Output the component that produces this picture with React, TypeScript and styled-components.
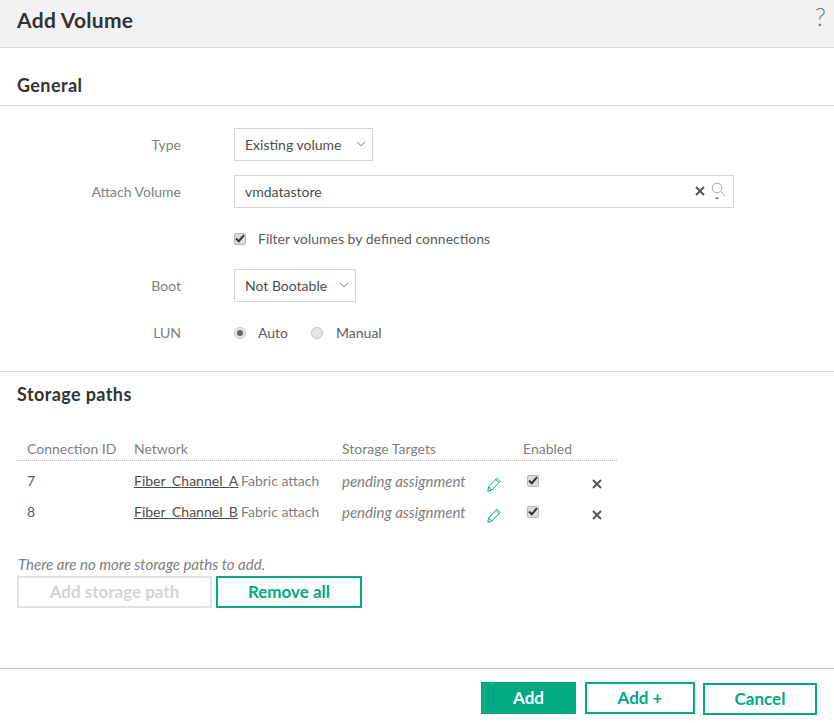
import styled, { createGlobalStyle } from 'styled-components';

const GlobalStyle = createGlobalStyle`
  html, body {
    margin: 0;
    padding: 0;
    background: #fff;
    overflow: hidden;
  }
  * {
    box-sizing: border-box;
  }
`;

const Page = styled.div`
  width: 834px;
  height: 723px;
  display: flex;
  flex-direction: column;
  font-family: Lato, 'Noto Sans', sans-serif;
  font-size: 14px;
  color: #666;
`;

const Header = styled.header`
  height: 48px;
  flex: none;
  background: #f2f2f2;
  border-bottom: 1px solid #d8d8d8;
  display: flex;
  justify-content: space-between;
  padding: 0 8px 0 17px;
`;

const Title = styled.h1`
  margin: 7px 0 0;
  font-size: 21px;
  line-height: 26px;
  font-weight: 700;
  letter-spacing: 0.3px;
  color: #333;
`;

const Help = styled.span`
  font-size: 26px;
  font-weight: 300;
  line-height: 32px;
  color: #777;
`;

const SectionHead = styled.h2`
  margin: 0;
  height: 58px;
  padding: 26px 17px 0;
  font-size: 18px;
  line-height: 22px;
  font-weight: 700;
  letter-spacing: 0.4px;
  color: #333;
  border-bottom: 1px solid #dcdcdc;
`;

const Form = styled.div`
  height: 269px;
  padding-top: 22px;
  border-bottom: 1px solid #dcdcdc;
  display: flex;
  flex-direction: column;
`;

const Row = styled.div<{ $height: number; $mb?: number }>`
  height: ${(p) => p.$height}px;
  margin-bottom: ${(p) => p.$mb ?? 0}px;
  display: flex;
  align-items: center;
`;

const Label = styled.div`
  width: 181px;
  text-align: right;
  margin-right: 53px;
  color: #808080;
`;

const Select = styled.div<{ $width: number }>`
  width: ${(p) => p.$width}px;
  height: 33px;
  border: 1px solid #d6d6d6;
  padding: 0 6px 0 10px;
  color: #4d4d4d;
  display: flex;
  align-items: center;
  justify-content: space-between;
`;

const Input = styled(Select)`
  padding-right: 7px;
`;

const InputIcons = styled.span`
  display: flex;
  align-items: center;
  gap: 6px;
`;

const CheckBox = styled.span`
  width: 12px;
  height: 12px;
  flex: none;
  border: 1px solid #b8b8b8;
  border-radius: 2px;
  background: #dcdcdc;
  display: flex;
  align-items: center;
  justify-content: center;
`;

const CheckLabel = styled.span`
  margin-left: 12px;
  color: #5c5c5c;
`;

const Radio = styled.span<{ $on?: boolean }>`
  width: 12px;
  height: 12px;
  flex: none;
  border-radius: 50%;
  border: 1px solid #c4c4c4;
  background: #e6e6e6;
  display: flex;
  align-items: center;
  justify-content: center;
  &::after {
    content: '';
    display: ${(p) => (p.$on ? 'block' : 'none')};
    width: 6px;
    height: 6px;
    border-radius: 50%;
    background: #666;
  }
`;

const RadioText = styled.span`
  margin: 0 23px 0 12px;
  color: #5c5c5c;
  & + span + & {
    margin-left: 13px;
  }
`;

const StorageHead = styled.h2`
  margin: 11px 0 0;
  padding: 0 17px;
  font-size: 18px;
  line-height: 22px;
  font-weight: 700;
  letter-spacing: 0.4px;
  color: #333;
`;

const Paths = styled.div`
  width: 600px;
  margin: 33px 0 0 17px;
`;

const PathRow = styled.div<{ $head?: boolean }>`
  display: grid;
  grid-template-columns: 117px 107px 101px 145px 36px 69px 25px;
  align-items: center;
  height: ${(p) => (p.$head ? 23 : 31)}px;
  padding-bottom: ${(p) => (p.$head ? 2 : 0)}px;
  border-bottom: ${(p) => (p.$head ? '1px dotted #bbb' : 'none')};
  margin-bottom: ${(p) => (p.$head ? 4 : 0)}px;
`;

const HeadCell = styled.div<{ $span?: number }>`
  padding-left: ${(p) => (p.$span === 1 ? 10 : 0)}px;
  grid-column: span ${(p) => p.$span ?? 1};
  color: #808080;
`;

const IdCell = styled.div`
  padding-left: 10px;
  color: #5c5c5c;
`;

const NetworkLink = styled.a`
  color: #4d4d4d;
  text-decoration: underline;
  white-space: nowrap;
`;

const Muted = styled.div`
  color: #808080;
  white-space: nowrap;
`;

const Pending = styled(Muted)`
  font-size: 15px;
  font-style: italic;
`;

const IconCell = styled.div`
  display: flex;
  align-items: center;
  padding-top: 7px;
`;

const CheckCell = styled.div`
  padding: 0 0 0 4px;
`;

const Note = styled.div`
  margin: 28px 0 0 18px;
  height: 18px;
  line-height: 18px;
  font-size: 15px;
  font-style: italic;
  color: #808080;
`;

const ButtonRow = styled.div`
  display: flex;
  gap: 4px;
  margin: 3px 0 0 17px;
`;

const Button = styled.button<{
  $width: number;
  $variant?: 'primary' | 'disabled';
  $drop?: number;
}>`
  width: ${(p) => p.$width}px;
  height: 32px;
  padding: 0 0 2px;
  margin-top: ${(p) => p.$drop ?? 0}px;
  font: 700 17px Lato, 'Noto Sans', sans-serif;
  background: ${(p) => (p.$variant === 'primary' ? '#01a982' : '#fff')};
  color: ${(p) =>
    p.$variant === 'primary' ? '#fff' : p.$variant === 'disabled' ? '#d4d4d4' : '#01a982'};
  border: 2px solid ${(p) => (p.$variant === 'disabled' ? '#e2e2e2' : '#01a982')};
`;

const Footer = styled.footer`
  margin-top: 60px;
  height: 55px;
  border-top: 1px solid #c4c4c4;
  padding: 13px 17px 0 0;
  display: flex;
  justify-content: flex-end;
  gap: 8px;
  > button:first-child {
    margin-right: 1px;
  }
`;

const Chevron = () => (
  <svg width="10" height="6" viewBox="0 0 10 6" fill="none" stroke="#777" strokeWidth="1">
    <path d="M1 .8 5 4.8 9 .8" />
  </svg>
);

const Cross = ({ size = 10 }: { size?: number }) => (
  <svg width={size} height={size} viewBox="0 0 10 10" stroke="#555" strokeWidth="2" fill="none">
    <path d="M1 1 9 9M9 1 1 9" />
  </svg>
);

const Search = () => (
  <svg width="15" height="18" viewBox="0 0 15 18" fill="none" stroke="#aaa" strokeWidth="1">
    <circle cx="6" cy="6" r="4.8" />
    <path d="M9.5 9.5 14 14" />
    <path d="M3.5 15.5h5l-2.5 2z" fill="#777" stroke="none" />
  </svg>
);

const Pencil = () => (
  <svg width="14" height="15" viewBox="0 0 14 15" fill="none" stroke="#01a982" strokeWidth="1">
    <path d="M.8 14.2 1.6 10 10 1.2 13.2 4.4 4.8 13z" />
    <path d="M8.8 2.4 12 5.6M1.6 10 4.8 13" />
  </svg>
);

const Tick = () => (
  <svg width="10" height="9" viewBox="0 0 10 9" fill="none" stroke="#333" strokeWidth="2">
    <path d="M1 4.5 3.8 7.2 9 1.2" />
  </svg>
);

const paths = [
  { id: 7, network: 'Fiber_Channel_A' },
  { id: 8, network: 'Fiber_Channel_B' },
];

const App = () => {
  return (
    <Page>
      <GlobalStyle />
      <Header>
        <Title>Add Volume</Title>
        <Help>?</Help>
      </Header>

      <SectionHead>General</SectionHead>
      <Form>
        <Row $height={33} $mb={14}>
          <Label>Type</Label>
          <Select $width={139}>
            Existing volume
            <Chevron />
          </Select>
        </Row>
        <Row $height={33} $mb={14}>
          <Label>Attach Volume</Label>
          <Input $width={500}>
            vmdatastore
            <InputIcons>
              <Cross />
              <Search />
            </InputIcons>
          </Input>
        </Row>
        <Row $height={34} $mb={13}>
          <Label />
          <CheckBox>
            <Tick />
          </CheckBox>
          <CheckLabel>Filter volumes by defined connections</CheckLabel>
        </Row>
        <Row $height={33} $mb={15}>
          <Label>Boot</Label>
          <Select $width={122}>
            Not Bootable
            <Chevron />
          </Select>
        </Row>
        <Row $height={32}>
          <Label>LUN</Label>
          <Radio $on />
          <RadioText>Auto</RadioText>
          <Radio />
          <RadioText>Manual</RadioText>
        </Row>
      </Form>

      <StorageHead>Storage paths</StorageHead>
      <Paths>
        <PathRow $head>
          <HeadCell $span={1}>Connection ID</HeadCell>
          <HeadCell $span={2}>Network</HeadCell>
          <HeadCell $span={2}>Storage Targets</HeadCell>
          <HeadCell $span={2}>Enabled</HeadCell>
        </PathRow>
        {paths.map((path) => (
          <PathRow key={path.id}>
            <IdCell>{path.id}</IdCell>
            <div>
              <NetworkLink>{path.network}</NetworkLink>
            </div>
            <Muted>Fabric attach</Muted>
            <Pending>pending assignment</Pending>
            <IconCell>
              <Pencil />
            </IconCell>
            <CheckCell>
              <CheckBox>
                <Tick />
              </CheckBox>
            </CheckCell>
            <IconCell>
              <Cross />
            </IconCell>
          </PathRow>
        ))}
      </Paths>

      <Note>There are no more storage paths to add.</Note>
      <ButtonRow>
        <Button $width={195} $variant="disabled">
          Add storage path
        </Button>
        <Button $width={146}>Remove all</Button>
      </ButtonRow>

      <Footer>
        <Button $width={95} $variant="primary">
          Add
        </Button>
        <Button $width={110}>Add +</Button>
        <Button $width={114} $drop={1}>
          Cancel
        </Button>
      </Footer>
    </Page>
  );
};

export default App;
